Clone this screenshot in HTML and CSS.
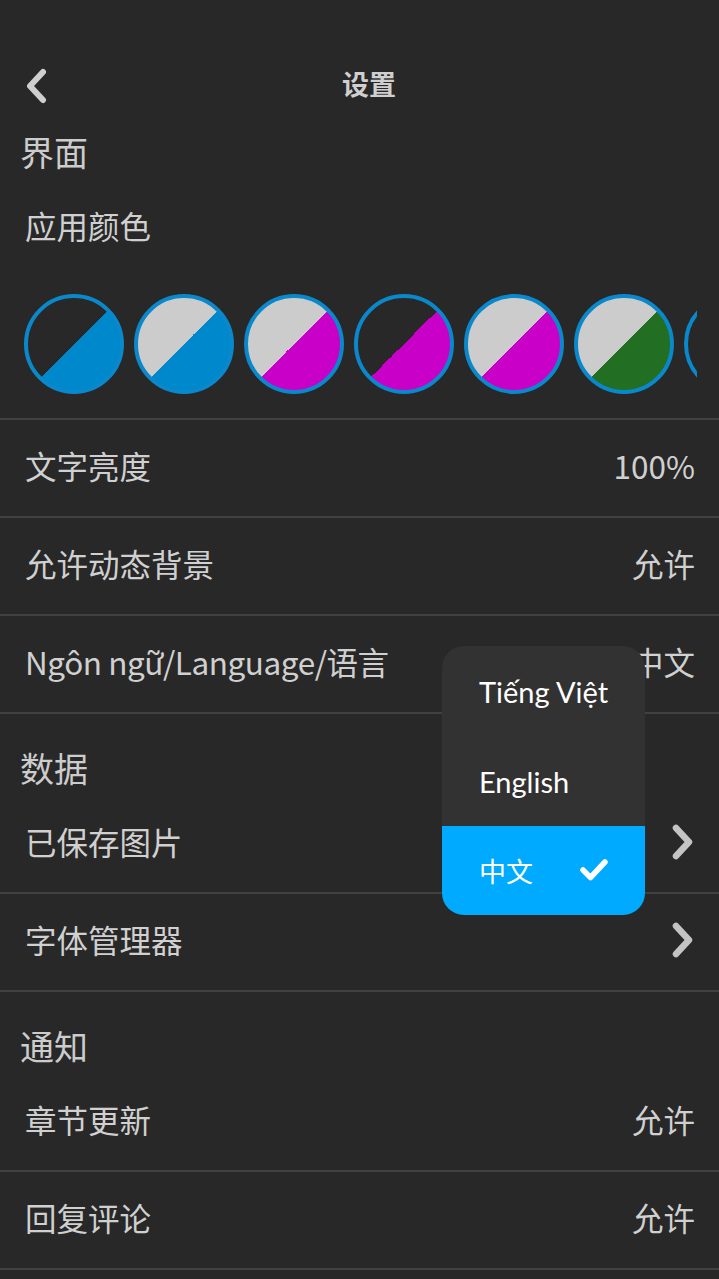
FILE: index.html
```html
<!DOCTYPE html>
<html lang="zh">
<head>
<meta charset="utf-8">
<title>设置</title>
<link rel="stylesheet" href="styles.css">
</head>
<body>
<div class="screen">
  <div class="topbar">
    <svg class="back" width="24" height="36" viewBox="0 0 24 36"><path d="M19 4 L6 18 L19 32" fill="none" stroke="#cfcfcf" stroke-width="6" stroke-linecap="round" stroke-linejoin="round"/></svg>
    <div class="title">设置</div>
  </div>

  <div class="section-title first">界面</div>
  <div class="color-block">
    <div class="color-label">应用颜色</div>
    <div class="swatches-wrap">
      <div class="swatches">
        <div class="swatch s1"></div>
        <div class="swatch s2"></div>
        <div class="swatch s3"></div>
        <div class="swatch s4"></div>
        <div class="swatch s5"></div>
        <div class="swatch s6"></div>
        <div class="swatch s7"></div>
      </div>
    </div>
  </div>
  <div class="row"><span class="label">文字亮度</span><span class="value">100%</span></div>
  <div class="row"><span class="label">允许动态背景</span><span class="value">允许</span></div>
  <div class="row"><span class="label tight">Ngôn ngữ/Language/语言</span><span class="value">中文</span></div>

  <div class="section-title">数据</div>
  <div class="row"><span class="label">已保存图片</span>
    <svg class="chev" width="26" height="38" viewBox="0 0 26 38"><path d="M7 5 L20 19 L7 33" fill="none" stroke="#c4c4c4" stroke-width="6.5" stroke-linecap="round" stroke-linejoin="round"/></svg>
  </div>
  <div class="row"><span class="label">字体管理器</span>
    <svg class="chev" width="26" height="38" viewBox="0 0 26 38"><path d="M7 5 L20 19 L7 33" fill="none" stroke="#c4c4c4" stroke-width="6.5" stroke-linecap="round" stroke-linejoin="round"/></svg>
  </div>

  <div class="section-title">通知</div>
  <div class="row"><span class="label">章节更新</span><span class="value">允许</span></div>
  <div class="row"><span class="label">回复评论</span><span class="value">允许</span></div>

  <div class="menu">
    <div class="menu-item">Tiếng Việt</div>
    <div class="menu-item">English</div>
    <div class="menu-item selected"><span>中文</span>
      <svg class="check" width="30" height="26" viewBox="0 0 30 26"><path d="M4 13 L11.5 20.5 L26 5" fill="none" stroke="#ffffff" stroke-width="5.5" stroke-linecap="round" stroke-linejoin="round"/></svg>
    </div>
  </div>
</div>
</body>
</html>
```

FILE: styles.css
```css
html, body {
  margin: 0;
  padding: 0;
  background: #282828;
}
.screen {
  position: relative;
  width: 719px;
  height: 1279px;
  overflow: hidden;
  background: #282828;
  font-family: "Noto Sans CJK SC", "Noto Sans", sans-serif;
  color: #d0d0d0;
}
.topbar {
  position: relative;
  height: 70px;
  padding-top: 50px;
  display: flex;
  align-items: center;
  justify-content: center;
}
.back {
  position: absolute;
  left: 24px;
  top: 68px;
}
.title {
  font-size: 27px;
  font-weight: bold;
  color: #cfcfcf;
  line-height: 40px;
  margin-left: 19px;
  margin-top: -2px;
}
.section-title {
  font-size: 34px;
  line-height: 40px;
  height: 40px;
  padding-top: 34px;
  padding-bottom: 8px;
  padding-left: 20px;
  color: #cccccc;
}
.section-title.first {
  padding-top: 12px;
  padding-bottom: 0;
}
.color-block {
  border-bottom: 2px solid #414141;
}
.color-label {
  margin-top: 33px;
  padding-left: 25px;
  font-size: 31.5px;
  line-height: 40px;
  height: 42px;
}
.swatches-wrap {
  padding: 47px 22px 24px 24px;
}
.swatches {
  display: flex;
  gap: 10px;
  overflow: hidden;
}
.swatch {
  flex-shrink: 0;
  width: 100px;
  height: 100px;
  box-sizing: border-box;
  border-radius: 50%;
  border: 4px solid #0a88cc;
}
.s1 { background: linear-gradient(135deg, #282828 50%, #0088cc 50%); }
.s2 { background: linear-gradient(135deg, #cccccc 50%, #0088cc 50%); }
.s3 { background: linear-gradient(135deg, #cccccc 50%, #c800c8 50%); }
.s4 { background: linear-gradient(135deg, #282828 50%, #c800c8 50%); }
.s5 { background: linear-gradient(135deg, #cccccc 50%, #c800c8 50%); }
.s6 { background: linear-gradient(135deg, #cccccc 50%, #226e22 50%); }
.s7 { background: #282828; }
.row {
  height: 96px;
  border-bottom: 2px solid #414141;
  display: flex;
  align-items: center;
  justify-content: space-between;
  padding: 0 24px 0 25px;
  font-size: 31.5px;
}
.label, .value {
  line-height: 40px;
  margin-top: -7px;
}
.label.tight {
  letter-spacing: -0.45px;
}
.chev {
  margin-top: -4px;
}
.menu {
  position: absolute;
  left: 442px;
  top: 646px;
  width: 203px;
  height: 269px;
  border-radius: 22px;
  background: #323232;
  overflow: hidden;
  display: flex;
  flex-direction: column;
  font-family: "Lato", "Noto Sans CJK SC", sans-serif;
}
.menu-item {
  height: 90px;
  display: flex;
  align-items: center;
  padding-left: 37px;
  font-size: 29px;
  color: #ffffff;
  box-sizing: border-box;
}
.menu-item.selected {
  height: 89px;
  background: #00aaff;
  justify-content: space-between;
  padding-right: 36px;
  font-family: "Noto Sans CJK SC", sans-serif;
  font-size: 27px;
}
.check {
  margin-top: -2px;
}
```
